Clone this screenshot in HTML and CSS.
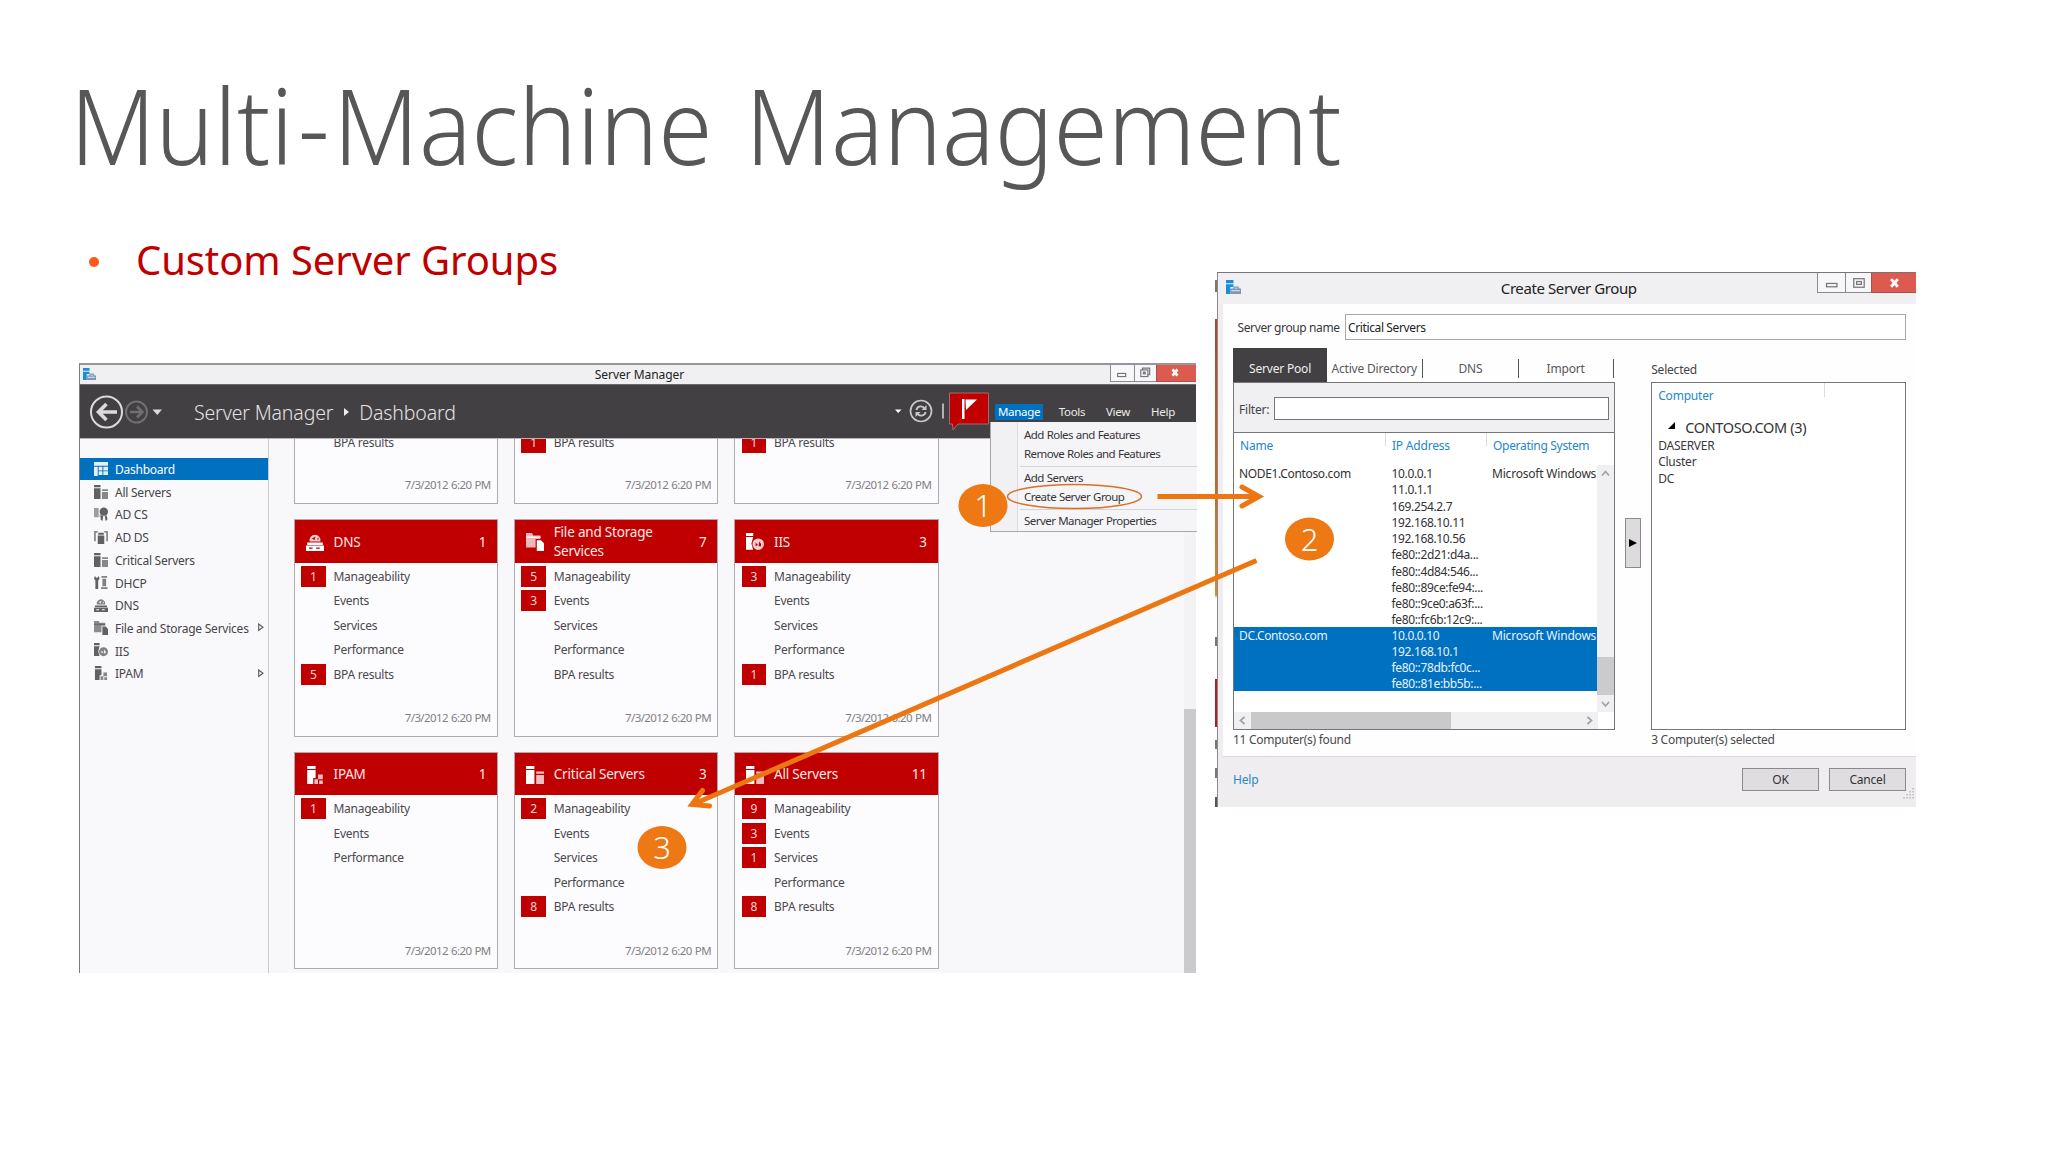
FILE: index.html
```html
<!DOCTYPE html>
<html lang="en">
<head>
<meta charset="utf-8">
<title>Multi-Machine Management</title>
<link rel="stylesheet" href="styles.css">
</head>
<body>
<svg class="defs" width="0" height="0" aria-hidden="true">
  <symbol id="i-dash" viewBox="0 0 15 15"><path d="M0 0h15v4H0zM0 5h4v10H0zM5 5h4v4H5zM10 5h5v4h-5zM5 10h4v4H5zM10 10h5v4h-5z"/></symbol>
  <symbol id="i-servers" viewBox="0 0 15 15"><path d="M0 0h7v2.4H0zM0 3.400h7V15H0z"/><path opacity=".75" d="M8.500 4.500H15V6.500H8.500zM8.500 7.500H15V15H8.500z"/></symbol>
  <symbol id="i-cert" viewBox="0 0 15 15"><path opacity=".6" d="M0 1h5v10H0zM6 8h2v3H6z"/><circle cx="10.500" cy="5" r="4.500"/><path d="M7.500 9l2.500 1-1 5-2-1.500zM13.500 9L11.500 10l1 5 2-1.500z"/></symbol>
  <symbol id="i-ds" viewBox="0 0 15 15"><path opacity=".7" d="M0 1h4v2H2v9H0zM11 1h4v11h-2V3h-2z"/><path d="M4.500 3h6v2h-6zM4 6h7v9H4z"/></symbol>
  <symbol id="i-dhcp" viewBox="0 0 15 15"><path d="M1 1l1.500 2h1L5 1l1 3-1.500 2v9h-3V6L0 4z"/><path opacity=".8" d="M8 1h6v2H8zM9 4h4v8H9zM7.500 13h7v2h-7z"/></symbol>
  <symbol id="i-dns" viewBox="0 0 15 15"><path opacity=".8" fill-rule="evenodd" d="M3 7a4.600 4.600 0 1 1 9 0zM5 4.500l2 1.500 1-3zM9 5.500l1.500-2v2z"/><path fill-rule="evenodd" d="M1 8h13v2H1zM0 10.500h15V15H0zM2.500 12v1.200h3V12zM8.500 12v1.200h3V12z"/></symbol>
  <symbol id="i-files" viewBox="0 0 15 15"><path opacity=".72" d="M0 0h5l1 2h6v3H8v7H0z"/><path d="M0 3h12v1H0zM9 6h3.500L15 8.500V15H9z"/></symbol>
  <symbol id="i-iis" viewBox="0 0 15 15"><path d="M0 0h6v2.400H0zM0 3.400h6L4.500 9l1.500 5H0z"/><path opacity=".8" fill-rule="evenodd" d="M10.200 4.500a4.800 4.800 0 1 1 0 9.600 4.800 4.800 0 0 1 0-9.600zM8 8v3l2-1zM11 7l-.5 4h2V9z"/></symbol>
  <symbol id="i-ipam" viewBox="0 0 15 15"><path d="M1 0h7v2.400H1zM1 3.400h7V10H6v5H1z"/><path opacity=".75" fill-rule="evenodd" d="M10 7h4v4h-4zM7 11h3v4H7zM11 12h3v3h-3z"/></symbol>
  <symbol id="i-app" viewBox="0 0 14 14"><path fill="#1b8fd6" d="M0 0h7v3H0zM0 4h7v2.500H4V13H0z"/><path fill="#7b97b4" d="M4 8h2.500L7.500 6h4l1 2H14v5H4z"/><path fill="#dfe9f2" d="M8 7.200h3v.8H8zM5 9.500h8v1H5z"/></symbol>
</svg>

<main class="slide">
  <h1>Multi<span class="dash">-</span>Machine Management</h1>
  <ul class="points"><li><i></i><span>Custom Server Groups</span></li></ul>

  <section class="win manager">
    <header class="titlebar">
      <svg class="app"><use href="#i-app"/></svg>
      <span class="caption">Server Manager</span>
      <div class="controls">
        <b><svg viewBox="0 0 24 18"><rect x="7.500" y="9.500" width="9" height="3.500"/></svg></b>
        <b><svg viewBox="0 0 22 18"><path d="M8.500 6V3.500h8V11H14"/><rect x="6.500" y="5.500" width="8" height="7.500"/><rect x="9.500" y="8" width="2" height="2"/></svg></b>
        <b class="close"><svg viewBox="0 0 40 18"><path d="M17.500 5l5.500 7M23 5l-5.500 7"/></svg></b>
      </div>
    </header>
    <nav class="navbar">
      <svg class="history" viewBox="0 0 76 40">
        <circle cx="16.500" cy="20" r="15.500" fill="none" stroke="#dcdadb" stroke-width="2"/>
        <path d="M27 20H8.500M16.500 12l-8 8 8 8" fill="none" stroke="#dcdadb" stroke-width="3.600"/>
        <circle cx="46.500" cy="20" r="10.500" fill="none" stroke="#706e70" stroke-width="2"/>
        <path d="M40 20h12M47 14.500l5.500 5.500-5.500 5.500" fill="none" stroke="#706e70" stroke-width="2.600"/>
        <path d="M62.500 17.500h9.500l-4.700 5.500z" fill="#dcdadb"/>
      </svg>
      <span class="crumb">Server Manager</span>
      <svg class="sep" viewBox="0 0 5 8"><path d="M0 0l5 4-5 4z"/></svg>
      <span class="crumb last">Dashboard</span>
      <svg class="tools" viewBox="0 0 100 46">
        <path d="M6 21.500h6.500L9.200 25z" fill="#fff"/>
        <circle cx="32" cy="23" r="10.500" fill="none" stroke="#c9c7c8" stroke-width="1.700"/>
        <path d="M27.500 22c.5-4 6-5 8-1.500M36.500 24c-.5 4-6 5-8 1.500" fill="none" stroke="#c9c7c8" stroke-width="1.900"/>
        <path d="M37.500 17v5h-5zM26.500 29v-5h5z" fill="#c9c7c8"/>
        <path d="M54 15.500v15" stroke="#d8d6d7" stroke-width="1.500"/>
        <path d="M60.500 5h39v31H69l-5 6-.500-6h-3z" fill="#c00000" stroke="#a9686a"/>
        <path d="M73 11h2.500v20H73zM76.500 11.500H88L77 22z" fill="#fff"/>
      </svg>
      <div class="menus"><span class="on">Manage</span><span>Tools</span><span>View</span><span>Help</span></div>
    </nav>
    <div class="body">
      <aside>
        <a class="on"><svg><use href="#i-dash"/></svg><span>Dashboard</span></a>
        <a><svg><use href="#i-servers"/></svg><span>All Servers</span></a>
        <a><svg><use href="#i-cert"/></svg><span>AD CS</span></a>
        <a><svg><use href="#i-ds"/></svg><span>AD DS</span></a>
        <a><svg><use href="#i-servers"/></svg><span>Critical Servers</span></a>
        <a><svg><use href="#i-dhcp"/></svg><span>DHCP</span></a>
        <a><svg><use href="#i-dns"/></svg><span>DNS</span></a>
        <a><svg><use href="#i-files"/></svg><span>File and Storage Services</span><svg class="exp" viewBox="0 0 6 9"><path d="M.7 1v6.500L5 4.200z"/></svg></a>
        <a><svg><use href="#i-iis"/></svg><span>IIS</span></a>
        <a><svg><use href="#i-ipam"/></svg><span>IPAM</span><svg class="exp" viewBox="0 0 6 9"><path d="M.7 1v6.500L5 4.200z"/></svg></a>
      </aside>
      <div class="tiles">
        <article class="cut"><p>BPA results</p><time>7/3/2012 6:20 PM</time></article>
        <article class="cut"><p><b>1</b>BPA results</p><time>7/3/2012 6:20 PM</time></article>
        <article class="cut"><p><b>1</b>BPA results</p><time>7/3/2012 6:20 PM</time></article>

        <article><h2><svg><use href="#i-dns"/></svg><span>DNS</span><em>1</em></h2>
          <p><b>1</b>Manageability</p><p>Events</p><p>Services</p><p>Performance</p><p><b>5</b>BPA results</p><time>7/3/2012 6:20 PM</time></article>
        <article><h2><svg><use href="#i-files"/></svg><span>File and Storage<br>Services</span><em>7</em></h2>
          <p><b>5</b>Manageability</p><p><b>3</b>Events</p><p>Services</p><p>Performance</p><p>BPA results</p><time>7/3/2012 6:20 PM</time></article>
        <article><h2><svg><use href="#i-iis"/></svg><span>IIS</span><em>3</em></h2>
          <p><b>3</b>Manageability</p><p>Events</p><p>Services</p><p>Performance</p><p><b>1</b>BPA results</p><time>7/3/2012 6:20 PM</time></article>

        <article><h2><svg><use href="#i-ipam"/></svg><span>IPAM</span><em>1</em></h2>
          <p><b>1</b>Manageability</p><p>Events</p><p>Performance</p><time>7/3/2012 6:20 PM</time></article>
        <article><h2><svg><use href="#i-servers"/></svg><span>Critical Servers</span><em>3</em></h2>
          <p><b>2</b>Manageability</p><p>Events</p><p>Services</p><p>Performance</p><p><b>8</b>BPA results</p><time>7/3/2012 6:20 PM</time></article>
        <article><h2><svg><use href="#i-servers"/></svg><span>All Servers</span><em>11</em></h2>
          <p><b>9</b>Manageability</p><p><b>3</b>Events</p><p><b>1</b>Services</p><p>Performance</p><p><b>8</b>BPA results</p><time>7/3/2012 6:20 PM</time></article>
      </div>
      <div class="scroll"><i></i></div>
    </div>
    <div class="dropdown">
      <span>Add Roles and Features</span><span>Remove Roles and Features</span><hr>
      <span>Add Servers</span><span>Create Server Group</span><hr>
      <span>Server Manager Properties</span>
    </div>
  </section>

  <div class="fringe"></div>
  <section class="win dialog">
    <header class="titlebar">
      <svg class="app"><use href="#i-app"/></svg>
      <span class="caption">Create Server Group</span>
      <div class="controls">
        <b><svg viewBox="0 0 28 20"><rect x="8.500" y="11" width="11" height="3.500"/></svg></b>
        <b><svg viewBox="0 0 26 20"><rect x="8" y="6" width="11" height="9"/><rect x="11" y="9" width="5" height="3"/></svg></b>
        <b class="close"><svg viewBox="0 0 44 20"><path d="M19 6.500l7 8M26 6.500l-7 8"/></svg></b>
      </div>
    </header>
    <div class="pane">
      <div class="name"><label>Server group name</label><div class="input">Critical Servers</div></div>
      <div class="cols">
        <div class="pool">
          <div class="tabs"><span class="on">Server Pool</span><span>Active Directory</span><span>DNS</span><span>Import</span></div>
          <div class="box">
            <div class="filter"><label>Filter:</label><div class="input"></div></div>
            <div class="thead"><span>Name</span><span>IP Address</span><span>Operating System</span></div>
            <div class="list">
              <div class="rows">
                <div class="row"><span>NODE1.Contoso.com</span><span>10.0.0.1<br>11.0.1.1<br>169.254.2.7<br>192.168.10.11<br>192.168.10.56<br>fe80::2d21:d4a...<br>fe80::4d84:546...<br>fe80::89ce:fe94:...<br>fe80::9ce0:a63f:...<br>fe80::fc6b:12c9:...</span><span>Microsoft Windows</span></div>
                <div class="row sel"><span>DC.Contoso.com</span><span>10.0.0.10<br>192.168.10.1<br>fe80::78db:fc0c...<br>fe80::81e:bb5b:...</span><span>Microsoft Windows</span></div>
              </div>
              <div class="vbar"><svg viewBox="0 0 17 17"><path d="M5 10.500l3.500-4 3.500 4"/></svg><i></i><svg viewBox="0 0 17 17"><path d="M5 7l3.500 4L12 7"/></svg></div>
            </div>
            <div class="hbar"><svg viewBox="0 0 17 17"><path d="M10.500 5l-4 3.500 4 3.500"/></svg><i></i><svg viewBox="0 0 17 17"><path d="M6.500 5l4 3.500-4 3.500"/></svg></div>
          </div>
          <div class="count">11 Computer(s) found</div>
        </div>
        <div class="move"><svg viewBox="0 0 8 8"><path d="M0 0l8 4-8 4z"/></svg></div>
        <div class="picked">
          <div class="label">Selected</div>
          <div class="box">
            <div class="phead">Computer</div>
            <div class="group"><svg viewBox="0 0 7 7"><path d="M7 0v7H0z"/></svg>CONTOSO.COM (3)</div>
            <div class="host">DASERVER</div><div class="host">Cluster</div><div class="host">DC</div>
          </div>
          <div class="count">3 Computer(s) selected</div>
        </div>
      </div>
    </div>
    <footer><a>Help</a><button>OK</button><button>Cancel</button>
      <svg class="grip" viewBox="0 0 12 12"><path d="M10 0v12M7 3v9M4 6v6M1 9v3" stroke-dasharray="1.500 1.500"/></svg></footer>
  </section>

  <svg class="marks" viewBox="0 0 2048 1152">
    <g fill="none" stroke="#ec7612" stroke-width="5">
      <ellipse cx="1074.500" cy="496.500" rx="67" ry="12" stroke="#d9702a" stroke-width="1.500"/>
      <path d="M1157.500 496.500H1256"/>
      <path d="M1242 487l17 9.500-17 9.500" stroke-linecap="round"/>
      <path d="M1256.500 560.500L695 803.500"/>
      <path d="M702.500 790.500L692 804.500l17.500 1.500" stroke-linecap="round"/>
    </g>
    <g fill="#ed7814"><ellipse cx="983" cy="505.500" rx="24.500" ry="21.500"/><ellipse cx="1309.500" cy="539" rx="24.500" ry="21.500"/><ellipse cx="662" cy="847.500" rx="24.500" ry="21.500"/></g>
    <g class="num"><text x="983" y="517">1</text><text x="1309.500" y="550.500">2</text><text x="662" y="859">3</text></g>
  </svg>
</main>
</body>
</html>
```
FILE: styles.css
```css
* { box-sizing: border-box; }
body { margin: 0; background: #fff; font-family: "Noto Sans", "Open Sans", sans-serif; color: #444; }
h1, h2, p, ul { margin: 0; padding: 0; font-weight: 400; }
.defs { position: absolute; }
.slide { position: relative; width: 2048px; height: 1152px; overflow: hidden; background: #fff; white-space: nowrap; }
h1 { padding: 65px 0 0 70px; font-size: 105px; line-height: 120px; font-weight: 300; color: #575757; word-spacing: 8px; transform: scaleX(.935); transform-origin: 70px 0; }
.dash { padding: 0 4px 0 5px; }
.points { list-style: none; padding: 50px 0 0 89px; }
.points li { display: flex; align-items: center; font-size: 40px; line-height: 50px; color: #c00000; letter-spacing: -.1px; }
.points i { width: 10px; height: 10px; border-radius: 5px; background: #fb5a17; margin: 4px 37px 0 0; }

/* windows */
.win { position: absolute; font-size: 12px; }
.titlebar { display: flex; background: #f0eff1; color: #222; }
.caption { flex: 1; text-align: center; }
.controls { display: flex; }
.controls b { display: block; background: #f7f6f8; border: 1px solid #8d8b8f; border-width: 0 0 1px 1px; }
.controls svg { display: block; fill: none; stroke: #77757a; stroke-width: 1.3; }
.controls .close { background: #dd5a4f; border-color: #a9524c; }
.controls .close svg { stroke: #fff; stroke-width: 3; }

.manager { left: 79px; top: 363px; width: 1117px; height: 610px; border-top: 2px solid #98969a; border-left: 1px solid #7c7a80; background: #f8f7fa; display: flex; flex-direction: column; }
.manager .titlebar { height: 19px; align-items: flex-start; }
.manager .app { width: 13px; height: 13px; margin: 3px 0 0 3px; }
.manager .caption { line-height: 20px; padding-left: 73px; letter-spacing: -.05px; }
.manager .controls svg { height: 16px; }
.manager .controls b:nth-child(1) { width: 24px; }
.manager .controls b:nth-child(2) { width: 22px; }
.manager .controls b:nth-child(3) { width: 40px; }
.navbar { height: 55px; display: flex; align-items: center; background: #424042; border-top: 1px solid #6c6a6d; border-bottom: 1px solid #b5b3b6; }
.history { width: 76px; height: 40px; margin-left: 10px; }
.crumb { font-size: 19.500px; line-height: 28px; font-weight: 300; color: #e3e1e2; letter-spacing: -.15px; margin-left: 28px; padding-top: 2px; }
.crumb.last { margin-left: 0; }
.navbar .sep { width: 5px; height: 8px; margin: 0 10px 0 11px; fill: #eee; }
.tools { width: 100px; height: 46px; margin-left: auto; margin-top: -2px; }
.menus { display: flex; width: 207px; padding: 1px 0 0 6px; font-size: 11.500px; line-height: 16px; color: #eceaeb; letter-spacing: -.3px; }
.menus span { width: 46px; text-align: center; }
.menus .on { width: 48px; background: #0070c0; color: #fff; margin-right: 5px; }
.menus span:nth-child(2) { width: 48px; }
.menus span:nth-child(3) { width: 44px; }

.manager .body { flex: 1; display: flex; overflow: hidden; }
aside { width: 189px; padding-top: 18.500px; border-right: 1px solid #c9c8cb; background: #f9f8fb; }
aside a { display: flex; align-items: center; height: 22.700px; padding-left: 14px; letter-spacing: -.24px; color: #474549; }
aside a span { padding-top: 1.500px; }
aside a svg { width: 14px; height: 14px; margin-right: 7px; fill: #626064; }
aside .on { background: #0070bf; color: #fff; }
aside .on svg { fill: #e4eff8; }
aside a .exp { width: 6px; height: 9px; margin: 0 4px 0 auto; fill: none; stroke: #555; stroke-width: 1.1; }

.tiles { display: grid; grid-template-columns: repeat(3, 204.700px); grid-auto-rows: 217.300px; gap: 15.400px 15.600px; margin: -152.400px 0 0 24.500px; }
.tiles article { display: flex; flex-direction: column; border: 1px solid #adabae; background: #fcfbfd; }
.tiles .cut { padding-top: 142.400px; }
.tiles h2 { display: flex; align-items: center; height: 42.500px; margin-bottom: 1px; padding: 1px 11px 0; background: #c00000; color: #fbe9e9; font-size: 13.500px; line-height: 19px; letter-spacing: -.2px; }
.tiles h2 svg { width: 18px; height: 18px; fill: #fff; margin-right: 10px; }
.tiles h2 em { margin-left: auto; font-style: normal; }
.tiles p { height: 24.500px; padding-left: 39px; line-height: 25.500px; letter-spacing: -.26px; color: #4b494d; }
.tiles p b { display: inline-block; width: 24.500px; height: 21px; margin: 0 8px 0 -32.500px; background: #c00000; color: #f6d5d5; font-weight: 400; line-height: 21px; text-align: center; }
.tiles time { margin-top: auto; padding: 0 6.500px 8.500px 0; text-align: right; line-height: 18px; font-size: 11.500px; letter-spacing: -.62px; word-spacing: .8px; color: #828085; }
.scroll { width: 12px; margin-left: auto; background: #f3f2f5; display: flex; }
.scroll i { flex: 1; margin-top: 270px; background: #cbcacc; }

.dropdown { position: absolute; left: 910px; top: 57px; width: 207px; height: 110px; padding: 3px 0 0 29px; border: 1px solid #a9a7aa; border-width: 0 0 1px 1px; background: linear-gradient(90deg, #f1f0f3 26px, #dddcdf 26px, #dddcdf 27px, #f5f4f7 27px); }
.dropdown span { display: block; height: 19.300px; line-height: 19.300px; padding-left: 4px; font-size: 11.500px; letter-spacing: -.55px; word-spacing: .4px; color: #38363a; }
.dropdown hr { margin: 2px 0 1.500px; border: 0; height: 1px; background: #d5d4d7; }

/* dialog */
.fringe { position: absolute; left: 1215px; top: 280px; width: 2px; height: 527px; background: linear-gradient(#777 0 12px, #fff 12px 39px, #b0452c 39px, #c8641d 200px, #d98a2c 315px, #fff 318px 357px, #777 357px 366px, #fff 366px 399px, #a82222 399px 447px, #fff 447px 460px, #777 460px 469px, #fff 469px 488px, #777 488px 498px, #fff 498px 517px, #555 517px); }
.dialog { left: 1217px; top: 272px; width: 699px; height: 535px; border-top: 1px solid #77757a; border-left: 1px solid #8b898e; background: #efedef; letter-spacing: -.2px; display: flex; flex-direction: column; }
.dialog .titlebar { height: 31px; }
.dialog .app { width: 15px; height: 15px; margin: 7px 0 0 8px; }
.dialog .caption { font-size: 15px; line-height: 30px; padding-left: 80px; letter-spacing: -.4px; }
.dialog .controls svg { height: 19px; width: 100%; }
.dialog .controls b:nth-child(1) { width: 28.500px; height: 20px; }
.dialog .controls b:nth-child(2) { width: 26px; height: 20px; }
.dialog .controls b:nth-child(3) { width: 45px; height: 20px; }
.pane { height: 453px; margin-left: 5px; padding: 10px 10px 0; background: #fefefe; border-bottom: 1px solid #dad8db; }
.name { display: flex; align-items: center; height: 26px; padding-left: 4.500px; color: #3a383c; }
.name label { width: 107.500px; letter-spacing: -.38px; }
.name .input { flex: 1; height: 26px; padding-left: 2px; line-height: 25px; border: 1px solid #a9a7ab; color: #222; background: #fff; letter-spacing: -.38px; }
.cols { display: flex; margin-top: 8px; }
.pool { width: 382px; }
.tabs { display: flex; height: 34px; align-items: center; padding-top: 6px; }
.tabs span { flex: 1; border-right: 1.500px solid #555; line-height: 19px; text-align: center; color: #59575b; position: relative; left: -1px; }
.tabs span:nth-child(2) { padding-right: 1px; padding-left: 1px; }
.tabs .on { left: 0; height: 34px; line-height: 41px; margin-top: -6px; background: #424042; color: #eee; border: 0; }
.pool .box, .picked .box { height: 348px; border: 1px solid #77757a; background: #fff; }
.filter { display: flex; align-items: center; height: 50px; padding: 4px 5px 0; background: #f0eff1; border-bottom: 1px solid #77757a; }
.filter label { width: 34.500px; letter-spacing: -.2px; }
.filter .input { flex: 1; height: 23px; margin-top: -2px; border: 1px solid #77757a; background: #fff; }
.thead { display: grid; grid-template-columns: 152px 101px 1fr; height: 32px; line-height: 25px; color: #2686c9; }
.thead span { padding-left: 6px; background: linear-gradient(#dcdbde, #dcdbde) right 0 top 0 / 1px 13px no-repeat; }
.thead span:last-child { background: none; letter-spacing: -.3px; }
.list { display: flex; height: 247px; }
.rows { flex: 1; overflow: hidden; }
.row { display: grid; grid-template-columns: 152px 101px 1fr; line-height: 16.250px; color: #333135; letter-spacing: -.35px; padding-top: 1px; }
.row span { padding-left: 5px; }
.row span:nth-child(2) { padding-left: 5.500px; }
.row span:nth-child(3) { letter-spacing: -.2px; }
.row:first-child { height: 162px; }
.sel { height: 64px; background: #0070c0; color: #e9f3fb; line-height: 16px; }
.vbar { width: 17px; background: #f0eff1; display: flex; flex-direction: column; }
.vbar i { height: 38.500px; margin-top: auto; background: #cbcacc; }
.vbar svg, .hbar svg { width: 17px; height: 17px; fill: none; stroke: #a3a1a5; stroke-width: 1.700; }
.hbar { display: flex; width: 364px; height: 17px; background: #f0eff1; }
.hbar i { width: 200px; margin-right: auto; background: #c9c8cb; }
.count { line-height: 19px; color: #4a484c; letter-spacing: -.28px; }
.move { width: 15.500px; height: 50px; margin: 169.500px 10.500px 0 10.500px; border: 1px solid #8b898e; background: #dddbde; display: flex; align-items: center; justify-content: center; }
.move svg { width: 8px; height: 8px; }
.picked { width: 255px; }
.picked .label { height: 34px; line-height: 43px; }
.phead { padding-left: 6px; height: 33px; line-height: 26px; color: #2686c9; background: linear-gradient(#dcdbde, #dcdbde) 172px 0 / 1px 14px no-repeat; }
.group { display: flex; align-items: center; height: 21px; padding-left: 16px; font-size: 14.500px; color: #333; letter-spacing: -.35px; }
.group svg { width: 7px; height: 7px; margin: -2px 10px 0 0; }
.host { height: 16.300px; line-height: 17px; padding-left: 6px; color: #3a383c; letter-spacing: -.25px; }
.dialog footer { flex: 1; display: flex; align-items: flex-start; padding: 10.500px 10px 0 15px; }
.dialog footer a { margin-right: auto; line-height: 24px; color: #2686c9; }
.dialog button { width: 77px; height: 23px; margin-left: 10px; padding: 0; font: inherit; letter-spacing: inherit; color: #333; background: #dfdde0; border: 1px solid #8b898e; }
.grip { width: 12px; height: 12px; margin: 20px -9px 0 -3px; fill: none; stroke: #bbb; stroke-width: 1.500; }

.marks { position: absolute; left: 0; top: 0; width: 2048px; height: 1152px; }
.num { fill: #fff; font-size: 31px; text-anchor: middle; font-weight: 300; }
```
